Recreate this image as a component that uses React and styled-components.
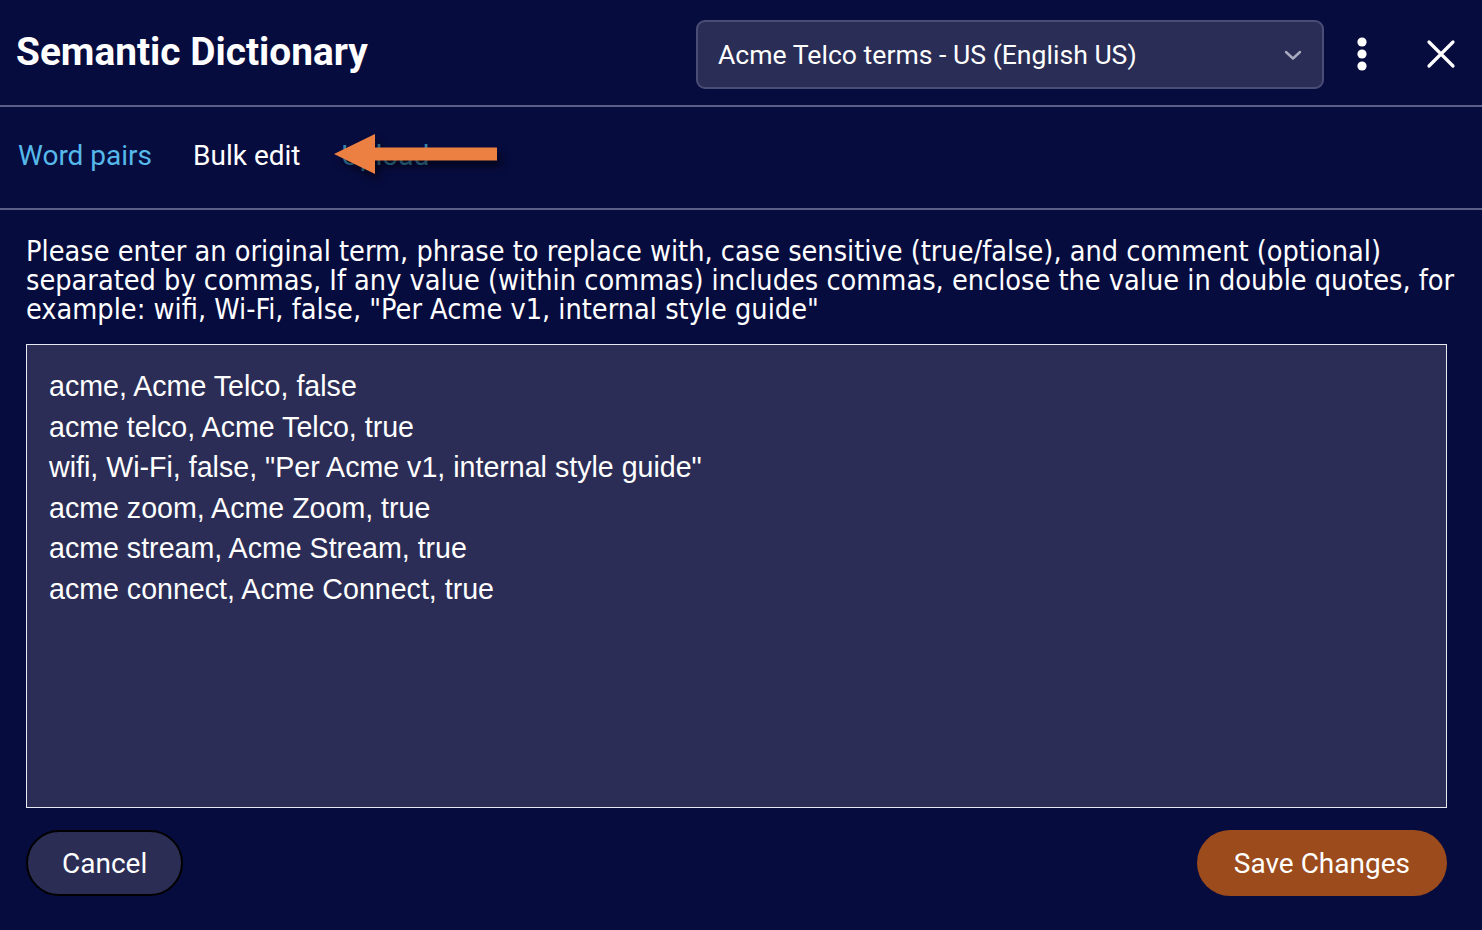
import React from "react";
import styled, { createGlobalStyle } from "styled-components";

const Global = createGlobalStyle`
  html, body { margin: 0; padding: 0; background: #070c3f; }
  body { font-family: Roboto, "Liberation Sans", sans-serif; color: #fff; }
  * { box-sizing: border-box; }
`;

const Page = styled.div`
  width: 1482px;
  height: 930px;
  background: #070c3f;
  display: flex;
  flex-direction: column;
  overflow: hidden;
`;

const Header = styled.header`
  height: 107px;
  display: flex;
  align-items: center;
  padding: 0 26px 2px 16px;
  border-bottom: 2px solid #5b5e86;
`;

const Title = styled.h1`
  margin: 0;
  flex: 1;
  font-family: Roboto, sans-serif;
  font-weight: 700;
  font-size: 38.8px;
  letter-spacing: 0;
  color: #fff;
`;

const Select = styled.div`
  width: 628px;
  height: 69px;
  margin-top: 6px;
  background: #2a2d55;
  border: 2px solid #4a4d76;
  border-radius: 9px;
  display: flex;
  align-items: center;
  justify-content: space-between;
  padding: 0 20px 0 20px;
  font-family: Roboto, sans-serif;
  font-size: 26.6px;
  color: #fff;
`;

const IconButton = styled.button`
  background: none;
  border: none;
  padding: 0;
  display: flex;
  align-items: center;
  justify-content: center;
  width: ${(p) => p.$w}px;
  margin-left: ${(p) => p.$ml}px;
  margin-top: 5px;
  cursor: pointer;
`;

const Tabs = styled.nav`
  height: 103px;
  display: flex;
  align-items: center;
  gap: 41px;
  padding: 0 18px 4px;
  border-bottom: 2px solid #5b5e86;
  position: relative;
`;

const Tab = styled.span`
  font-family: Roboto, sans-serif;
  font-size: 28px;
  color: ${(p) => (p.$active ? "#55b9ea" : p.$dim ? "#3a87ad" : "#ffffff")};
`;

const ArrowMark = styled.svg`
  position: absolute;
  left: 328px;
  top: 19px;
  filter: drop-shadow(4px 6px 4px rgba(0, 0, 0, 0.55));
`;

const Body = styled.main`
  flex: 1;
  display: flex;
  flex-direction: column;
  padding: 27px 10px 0 26px;
`;

const Instructions = styled.p`
  margin: 0;
  font-family: "DejaVu Sans Condensed", "DejaVu Sans", sans-serif;
  font-size: 28.6px;
  line-height: 29px;
  color: #fff;
`;

const Editor = styled.textarea`
  margin-top: 20px;
  width: 1421px;
  height: 464px;
  background: #2b2d56;
  border: 1px solid #e8e8f0;
  border-radius: 0;
  padding: 21px 22px;
  font-family: "Liberation Sans", Arial, sans-serif;
  font-size: 28.6px;
  line-height: 40.6px;
  color: #fff;
  resize: none;
  outline: none;
  overflow: hidden;
`;

const Footer = styled.footer`
  display: flex;
  justify-content: space-between;
  align-items: center;
  margin-top: 22px;
  width: 1421px;
`;

const Pill = styled.button`
  height: 66px;
  padding: 0 ${(p) => p.$px}px;
  border-radius: 33px;
  font-family: Roboto, sans-serif;
  font-size: 28px;
  color: #fff;
  background: ${(p) => (p.$primary ? "#9c4b1c" : "#2b2d55")};
  border: ${(p) => (p.$primary ? "none" : "2px solid #000")};
  cursor: pointer;
`;

const text = `acme, Acme Telco, false
acme telco, Acme Telco, true
wifi, Wi-Fi, false, "Per Acme v1, internal style guide"
acme zoom, Acme Zoom, true
acme stream, Acme Stream, true
acme connect, Acme Connect, true`;

export default function App() {
  return (
    <Page>
      <Global />
      <Header>
        <Title>Semantic Dictionary</Title>
        <Select>
          <span>Acme Telco terms - US (English US)</span>
          <svg width="18" height="12" viewBox="0 0 18 12">
            <path d="M2 3 L9 9.5 L16 3" fill="none" stroke="#a9abc0" strokeWidth="2.4" strokeLinecap="round" strokeLinejoin="round" />
          </svg>
        </Select>
        <IconButton $w={20} $ml={28} aria-label="More">
          <svg width="12" height="34" viewBox="0 0 12 34">
            <circle cx="6" cy="5" r="4.6" fill="#fff" />
            <circle cx="6" cy="17" r="4.6" fill="#fff" />
            <circle cx="6" cy="29" r="4.6" fill="#fff" />
          </svg>
        </IconButton>
        <IconButton $w={30} $ml={54} aria-label="Close">
          <svg width="30" height="30" viewBox="0 0 30 30">
            <path d="M3 3 L27 27 M27 3 L3 27" stroke="#fff" strokeWidth="3.2" strokeLinecap="round" />
          </svg>
        </IconButton>
      </Header>
      <Tabs>
        <Tab $active>Word pairs</Tab>
        <Tab>Bulk edit</Tab>
        <Tab $dim>Upload</Tab>
        <ArrowMark width="176" height="56" viewBox="0 0 176 56">
          <path d="M6 28 L47 8 L47 21.5 L169 21.5 L169 34.5 L47 34.5 L47 48 Z" fill="#ec8043" />
        </ArrowMark>
      </Tabs>
      <Body>
        <Instructions>
          Please enter an original term, phrase to replace with, case sensitive (true/false), and comment (optional) separated by commas, If any value (within commas) includes commas, enclose the value in double quotes, for example: wifi, Wi-Fi, false, "Per Acme v1, internal style guide"
        </Instructions>
        <Editor defaultValue={text} spellCheck={false} />
        <Footer>
          <Pill $px={34}>Cancel</Pill>
          <Pill $primary $px={37}>Save Changes</Pill>
        </Footer>
      </Body>
    </Page>
  );
}
